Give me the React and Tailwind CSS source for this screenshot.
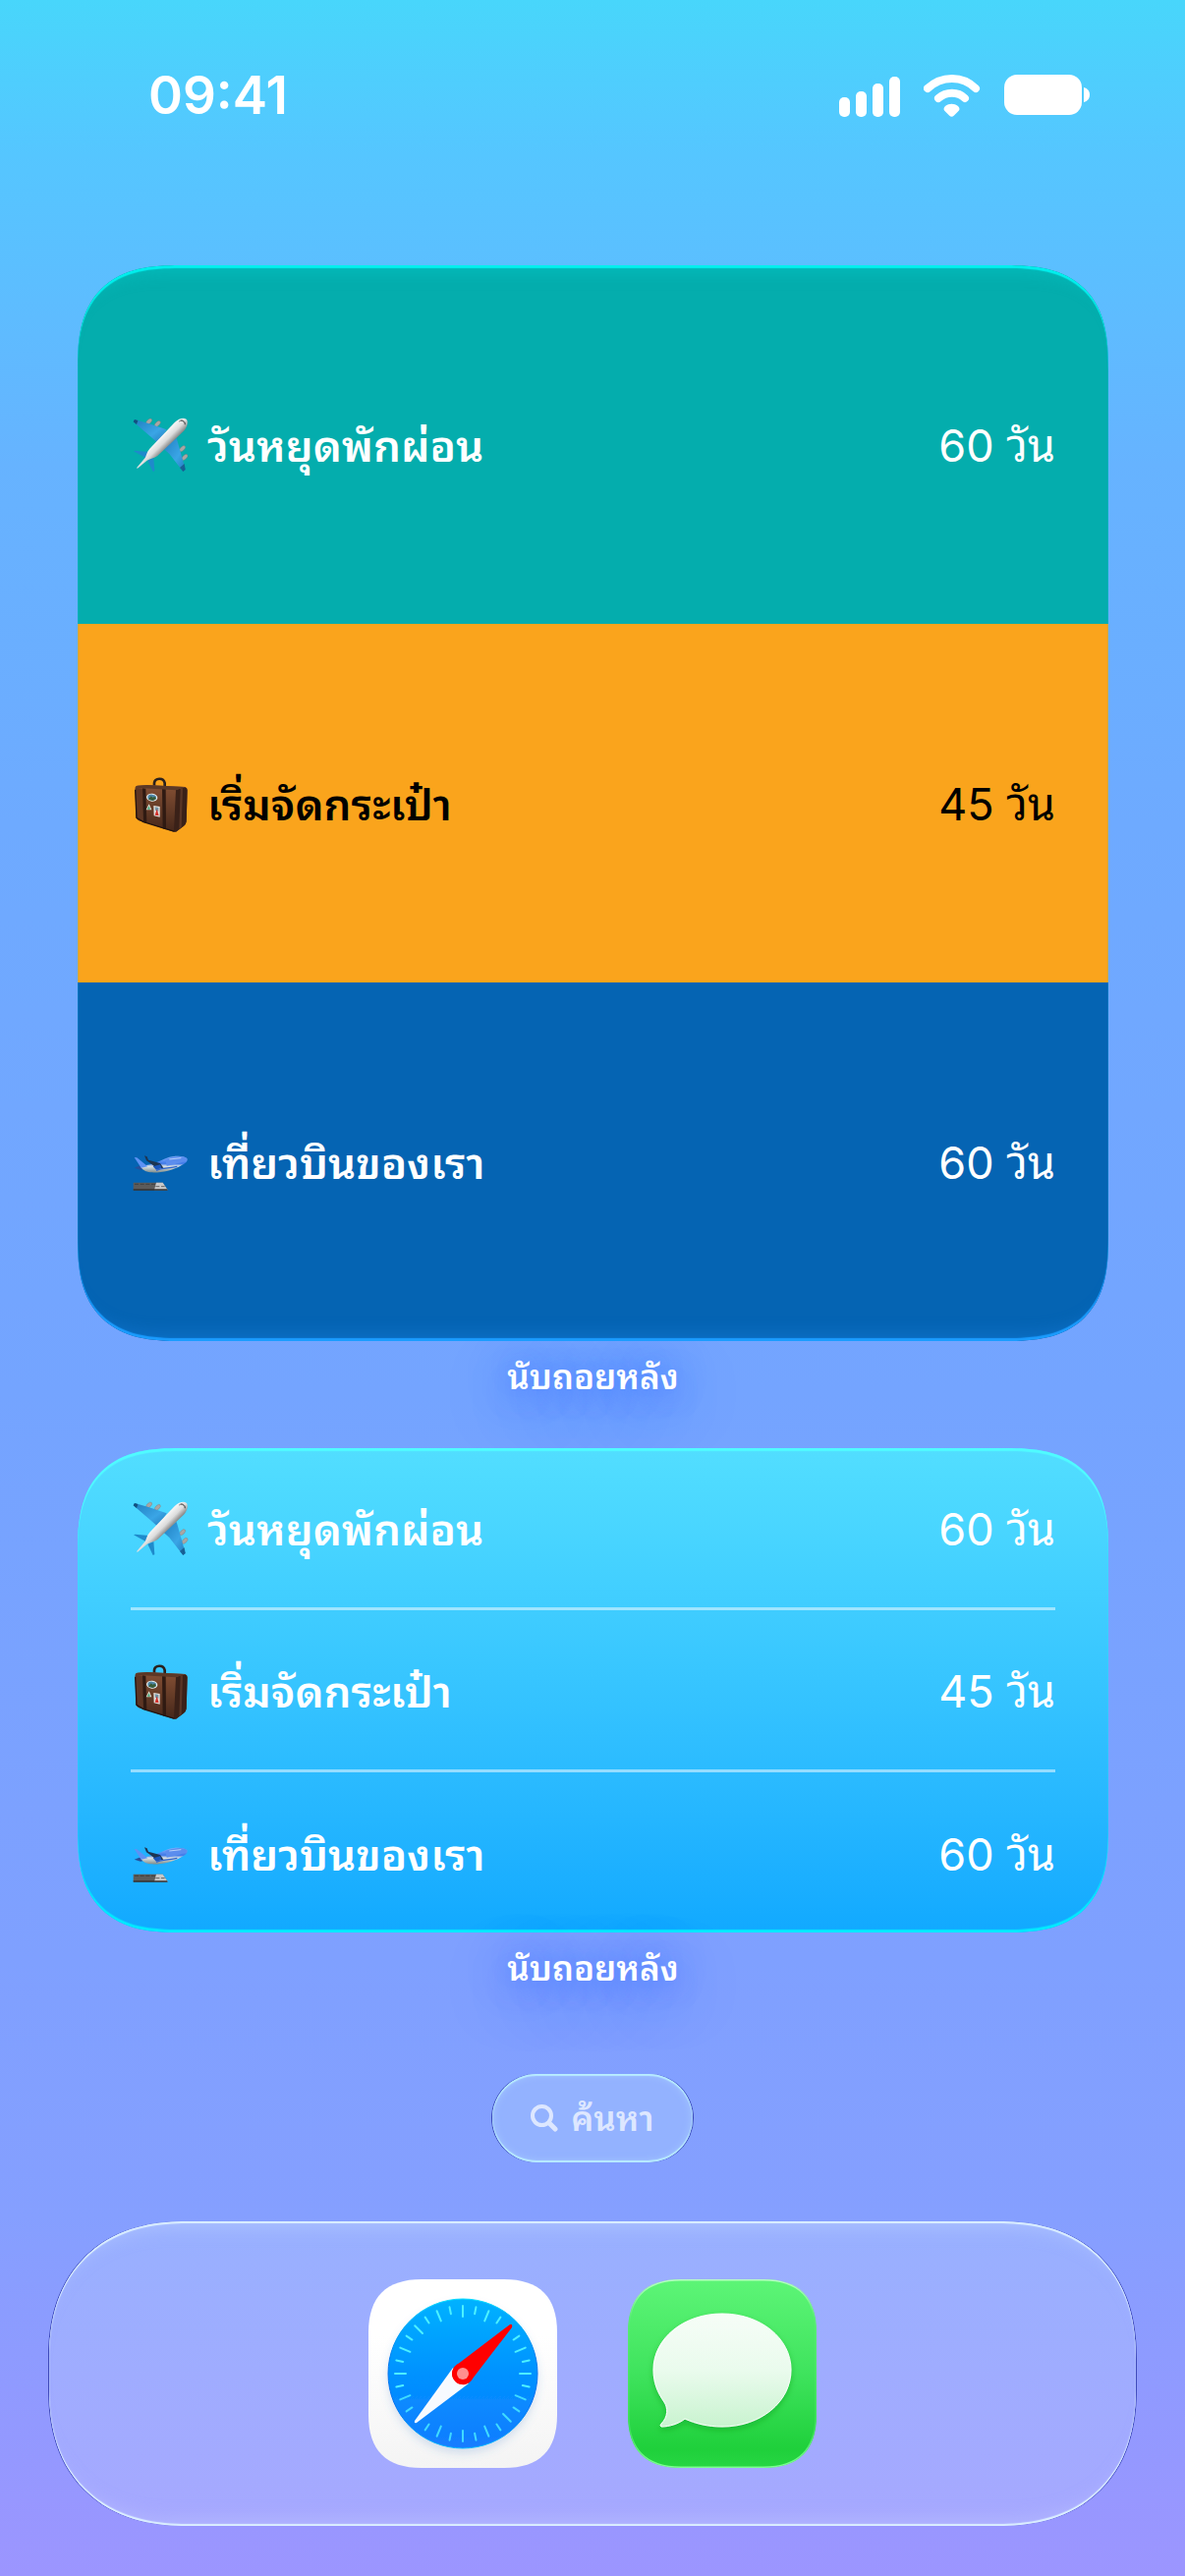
import React from 'react';

const EVENTS = [
    { icon: 'plane', title: 'วันหยุดพักผ่อน', days: '60 วัน', tile: 'bg-[#04adad] text-white' },
    { icon: 'luggage', title: 'เริ่มจัดกระเป๋า', days: '45 วัน', tile: 'bg-[#faa41c] text-black' },
    { icon: 'departure', title: 'เที่ยวบินของเรา', days: '60 วัน', tile: 'bg-[#0564b3] text-white' }
];

const SQUIRCLE = 'M54 0H138C174 0 192 18 192 54V138C192 174 174 192 138 192H54C18 192 0 174 0 138V54C0 18 18 0 54 0Z';

function PlaneIcon({ id }) {
    return (
        <svg viewBox="0 0 174 174" className="w-[58px] h-[58px] shrink-0" aria-hidden="true">
            <defs>
                <linearGradient id={`${id}-body`} x1="70" y1="50" x2="112" y2="92" gradientUnits="userSpaceOnUse">
                    <stop offset="0" stopColor="#8e8e8e" />
                    <stop offset="0.35" stopColor="#f4f4f4" />
                    <stop offset="0.65" stopColor="#dcdcdc" />
                    <stop offset="1" stopColor="#777" />
                </linearGradient>
                <linearGradient id={`${id}-wing`} x1="0" y1="0" x2="1" y2="1">
                    <stop offset="0" stopColor="#1f7fc0" />
                    <stop offset="0.6" stopColor="#3aa5e6" />
                    <stop offset="1" stopColor="#2079ba" />
                </linearGradient>
            </defs>
            <g fill="#a9a6a4" stroke="#77716d" strokeWidth="1">
                <ellipse cx="50" cy="15" rx="11" ry="6" transform="rotate(-45 50 15)" />
                <ellipse cx="76" cy="22" rx="11" ry="6" transform="rotate(-45 76 22)" />
                <ellipse cx="152" cy="98" rx="11" ry="6" transform="rotate(-45 152 98)" />
                <ellipse cx="159" cy="124" rx="11" ry="6" transform="rotate(-45 159 124)" />
            </g>
            <path d="M2 16 6 9 46 20 104 40 78 82 56 62Z" fill={`url(#${id}-wing)`} />
            <path d="M161 162 154 168 112 114 92 96 134 66 142 94Z" fill={`url(#${id}-wing)`} />
            <path d="M2 16 6 9 16 12 12 24Z" fill="#12507f" />
            <path d="M161 162 154 168 144 156 158 144Z" fill="#12507f" opacity="0.7" />
            <path d="M3 106 8 104 50 108 40 126Z" fill="#1f8acb" />
            <path d="M62 168 67 166 64 126 46 134Z" fill="#1f8acb" />
            <path d="M128 18C140 6 156 2 164 8C171 15 167 32 156 44L76 120C66 128 54 128 44 134L15 158L12 157L38 126C42 120 42 110 52 98Z" fill={`url(#${id}-body)`} />
            <path d="M142 15C149 8 162 14 160 24M147 12C154 12 160 18 160 25" fill="none" stroke="#5e5e5e" strokeWidth="3" />
        </svg>
    );
}

function LuggageIcon({ id }) {
    return (
        <svg viewBox="0 0 174 174" className="w-[58px] h-[58px] shrink-0" aria-hidden="true">
            <defs>
                <linearGradient id={`${id}-case`} x1="0" y1="0" x2="0" y2="1">
                    <stop offset="0" stopColor="#855034" />
                    <stop offset="1" stopColor="#45271a" />
                </linearGradient>
            </defs>
            <path d="M66 34V24C68 8 94 6 98 24V34" fill="none" stroke="#2b211d" strokeWidth="8" />
            <path d="M8 38Q8 33 14 32L44 30 160 36Q167 38 167 46L164 142Q163 150 156 155L132 173 122 172 18 138Q10 134 10 126Z" fill={`url(#${id}-case)`} />
            <path d="M132 45 160 37Q167 38 167 46L164 142Q163 150 156 155L132 173 126 170Z" fill="#3a2118" />
            <path d="M146 42 153 39 149 158 142 164Z" fill="#5a3626" />
            <path d="M8 38 30 41 35 144 18 138Q10 134 10 126Z" fill="#5d3624" />
            <path d="M30 40 40 41 43 147 33 143Z M90 40 101 41 102 166 92 163Z" fill="#2f1a12" />
            <path d="M8 38Q8 33 14 32L44 30 160 36 132 46Z" fill="#5b3826" />
            <path d="M8 44 12 130 33 143 128 172" fill="none" stroke="#24140e" strokeWidth="4" />
            <ellipse cx="59" cy="68" rx="17" ry="12" fill="#e4eeee" transform="rotate(6 59 68)" />
            <ellipse cx="59" cy="68" rx="13" ry="9" fill="#4d85a5" transform="rotate(6 59 68)" />
            <path d="M48 74 56 64 61 68 67 65 72 72 62 78Z" fill="#385c38" />
            <path d="M50 88 58 106 41 106Z" fill="#e7e7dc" />
            <path d="M50 94 54 104 44 104Z" fill="#45a47a" />
            <path d="M64 93 83 96 83 128 65 124Z" fill="#e5e1dc" />
            <path d="M68 97 79 99 79 110 69 108Z" fill="#7295a6" />
            <path d="M74 103 80 124 68 122Z" fill="#d12f2a" />
        </svg>
    );
}

function DepartureIcon({ id }) {
    return (
        <svg viewBox="0 0 174 174" className="w-[58px] h-[58px] shrink-0" aria-hidden="true">
            <defs>
                <linearGradient id={`${id}-hull`} x1="0" y1="0" x2="0" y2="1">
                    <stop offset="0" stopColor="#8db8ff" />
                    <stop offset="0.45" stopColor="#3d78e8" />
                    <stop offset="0.62" stopColor="#dbe3e6" />
                    <stop offset="1" stopColor="#7f8d8c" />
                </linearGradient>
            </defs>
            <path d="M5 104 20 98 42 106 24 110Z" fill="#274f9b" />
            <path d="M24 98C60 96 84 82 104 74C130 66 158 67 166 76C170 84 160 92 146 98C120 112 88 120 54 118C40 116 26 108 24 98Z" fill={`url(#${id}-hull)`} />
            <path d="M5 72 13 73 46 100 26 104Z" fill="#5d92f5" />
            <path d="M100 78C130 66 158 67 166 76C168 82 150 88 132 92L104 98Z" fill="#5b8dee" />
            <path d="M112 78 148 74" stroke="#b9d1fa" strokeWidth="3" fill="none" />
            <path d="M36 67 44 70 48 80 84 90 94 104 76 107 54 90 42 82Z" fill="#1d3552" />
            <path d="M62 100 84 94 88 104 72 110Z" fill="#1b57bd" />
            <path d="M72 112C90 104 110 106 136 100" stroke="#2d64ce" strokeWidth="4" fill="none" />
            <path d="M2 149H92L107 172H2Z" fill="#5c5b5a" />
            <path d="M72 149H92L107 172H66Z" fill="#c9c9c9" />
            <path d="M2 169H105L107 173H2Z" fill="#34302f" />
            <path d="M6 154H70M70 161H98" stroke="#343434" strokeWidth="2" strokeDasharray="12 5" />
        </svg>
    );
}

function EventIcon({ name, id }) {
    if (name === 'plane') return <PlaneIcon id={id} />;
    if (name === 'luggage') return <LuggageIcon id={id} />;
    return <DepartureIcon id={id} />;
}

function EventRow({ event, id }) {
    return (
        <>
            <div className="flex items-center gap-[18px] pl-0.5">
                <EventIcon name={event.icon} id={id} />
                <h2 className="pt-0.5 text-[44px] leading-[72px] font-semibold">{event.title}</h2>
            </div>
            <p className="pt-0.5 text-[45px] leading-[72px]">{event.days}</p>
        </>
    );
}

function WidgetLabel({ className }) {
    return (
        <p className={`text-center text-[35px] leading-[60px] font-semibold text-white [text-shadow:0_12px_60px_#2b6bffcc,0_4px_24px_#3b78ff80] ${className}`}>
            นับถอยหลัง
        </p>
    );
}

function StatusBar() {
    return (
        <header className="flex items-start justify-between pt-[65px] pl-[151px] pr-[96px] h-[270px] text-white">
            <time className="text-[53px] leading-[64px] font-semibold">09:41</time>
            <div className="flex items-center gap-6 pt-[9px]">
                <svg viewBox="0 0 62 46" className="w-[62px] h-[46px]" fill="currentColor" aria-hidden="true">
                    <rect x="0" y="25" width="11" height="20" rx="5" />
                    <rect x="17" y="19" width="11" height="26" rx="5" />
                    <rect x="34" y="11" width="11" height="34" rx="5" />
                    <rect x="51" y="4" width="11" height="41" rx="5" />
                </svg>
                <svg viewBox="0 0 58 46" className="w-[58px] h-[46px]" fill="none" stroke="currentColor" strokeWidth="8" strokeLinecap="round" aria-hidden="true">
                    <path d="M4 16C18 2.500 40 2.500 53 16" />
                    <path d="M15 26C23 19 35 19 42 26" />
                    <path d="M22 34C26 31 31 31 35 34Q38 37 35 39.500L31 43.500Q28.500 46 26 43.500L22 39.500Q19 37 22 34Z" fill="currentColor" stroke="none" />
                </svg>
                <svg viewBox="0 0 88 46" className="w-[88px] h-[46px]" fill="currentColor" aria-hidden="true">
                    <rect x="0" y="2" width="79" height="41" rx="13" />
                    <path d="M81 15C85 16 87 19 87 22.500C87 26 85 29 81 30Z" />
                </svg>
            </div>
        </header>
    );
}

function SafariIcon() {
    const ticks = Array.from({ length: 32 }, (_, i) => i).filter(i => i !== 4 && i !== 20);
    return (
        <svg viewBox="0 0 192 192" className="w-[192px] h-[192px]" aria-hidden="true">
            <defs>
                <linearGradient id="safari-tile" x1="0" y1="0" x2="0" y2="1">
                    <stop offset="0.3" stopColor="#ffffff" />
                    <stop offset="1" stopColor="#f4f4f4" />
                </linearGradient>
                <linearGradient id="safari-dial" x1="0" y1="0" x2="0" y2="1">
                    <stop offset="0" stopColor="#00b2ff" />
                    <stop offset="0.5" stopColor="#0092ff" />
                    <stop offset="1" stopColor="#147cff" />
                </linearGradient>
                <linearGradient id="safari-rim" x1="0" y1="0" x2="0" y2="1">
                    <stop offset="0" stopColor="#00dcff" />
                    <stop offset="0.4" stopColor="#0077ef" />
                    <stop offset="0.7" stopColor="#0070f0" />
                    <stop offset="1" stopColor="#00b8ff" />
                </linearGradient>
                <filter id="safari-shadow" x="-20%" y="-20%" width="140%" height="140%">
                    <feDropShadow dx="0" dy="5" stdDeviation="4" floodColor="#4a7fc8" floodOpacity="0.2" />
                </filter>
            </defs>
            <path d={SQUIRCLE} fill="url(#safari-tile)" />
            <circle cx="96" cy="96" r="76" fill="url(#safari-dial)" stroke="url(#safari-rim)" strokeWidth="1" filter="url(#safari-shadow)" />
            <g stroke="#4cf1ff" strokeWidth="2" strokeLinecap="round">
                {ticks.map(i => (
                    <line
                        key={i}
                        x1="96"
                        x2="96"
                        y1="27"
                        y2={i % 2 ? 34 : 38}
                        opacity={i > 9 && i < 23 ? 0.8 : 1}
                        transform={`rotate(${i * 11.25} 96 96)`}
                    />
                ))}
            </g>
            <path d="M47 144Q46 147 49 146L102 106 86 90Z" fill="#f7faff" />
            <path d="M144 46Q147 45 146 49L106 101A11 11 0 1 1 90 87Z" fill="#ff0000" />
            <circle cx="96" cy="96" r="11" fill="#ff0000" />
            <circle cx="96" cy="96" r="6" fill="#ff8f8f" />
        </svg>
    );
}

function MessagesIcon() {
    return (
        <svg viewBox="0 0 192 192" className="w-[192px] h-[192px]" aria-hidden="true">
            <defs>
                <linearGradient id="messages-tile" x1="0" y1="0" x2="0" y2="1">
                    <stop offset="0" stopColor="#5df577" />
                    <stop offset="0.5" stopColor="#3fe35d" />
                    <stop offset="0.9" stopColor="#1fd03b" />
                    <stop offset="1" stopColor="#27d643" />
                </linearGradient>
                <linearGradient id="messages-rim" x1="0" y1="0" x2="0" y2="1">
                    <stop offset="0" stopColor="#b9ffc4" />
                    <stop offset="0.2" stopColor="#5cec78" />
                    <stop offset="0.8" stopColor="#3fe05b" />
                    <stop offset="1" stopColor="#7dff92" />
                </linearGradient>
                <linearGradient id="messages-bubble" x1="0" y1="0" x2="0" y2="1">
                    <stop offset="0" stopColor="#f6fdf7" />
                    <stop offset="0.5" stopColor="#eafbed" />
                    <stop offset="1" stopColor="#c9f3d0" />
                </linearGradient>
                <clipPath id="messages-clip">
                    <path d={SQUIRCLE} />
                </clipPath>
                <filter id="messages-shadow" x="-20%" y="-20%" width="140%" height="140%">
                    <feDropShadow dx="0" dy="3" stdDeviation="3" floodColor="#008c1e" floodOpacity="0.4" />
                </filter>
            </defs>
            <path d={SQUIRCLE} fill="url(#messages-tile)" stroke="url(#messages-rim)" strokeWidth="3" clipPath="url(#messages-clip)" />
            <path
                d="M96 35C135 35 166 60 166 92C166 125 135 150 96 150C82 150 69 147 58 142C52 147 42 150 34 150Q32 149 34 147C41 140 41 131 37 125C30 115 26 105 26 92C26 60 57 35 96 35Z"
                fill="url(#messages-bubble)"
                stroke="#ffffff"
                strokeWidth="1"
                filter="url(#messages-shadow)"
            />
        </svg>
    );
}

export default function App() {
    return (
        <div className="min-h-screen flex flex-col font-[Inter,'Noto_Sans_Thai_Looped','Noto_Looped_Thai',Loma,Waree,Garuda,'Noto_Sans_Thai','Noto_Sans',sans-serif] bg-[linear-gradient(180deg,#48d6fb_0%,#55c6ff_6%,#66b3ff_18%,#6eaaff_32%,#74a4ff_54%,#7fa0ff_76%,#859fff_86%,#9299ff_94%,#9c95ff_100%)]">
            <StatusBar />

            <main className="flex flex-col pl-[79px] pr-[78px]">
                <section className="relative overflow-hidden rounded-[104px] [corner-shape:superellipse(1.4)]">
                    {EVENTS.map(event => (
                        <div key={event.icon} className={`flex items-center justify-between h-[365px] px-[54px] ${event.tile}`}>
                            <EventRow event={event} id={`large-${event.icon}`} />
                        </div>
                    ))}
                    <div className="absolute inset-0 pointer-events-none rounded-[inherit] [corner-shape:inherit] shadow-[inset_0_3px_1px_#00f0ee,inset_0_-3px_1px_#1a9cff,inset_0_24px_16px_-16px_#00cfd066,inset_0_-24px_16px_-16px_#1a80e066]" />
                </section>
                <WidgetLabel className="pt-[6px] pb-[43px]" />

                <section className="rounded-[104px] [corner-shape:superellipse(1.4)] px-[54px] text-white divide-y-3 divide-white/50 bg-linear-to-b from-[#52deff] to-[#11a9ff] shadow-[inset_0_3px_1px_#50fbff,inset_0_-3px_1px_#00eaff]">
                    {EVENTS.map(event => (
                        <div key={event.icon} className="flex items-center justify-between h-[165px] last:h-[163px] pt-0.5">
                            <EventRow event={event} id={`medium-${event.icon}`} />
                        </div>
                    ))}
                </section>
                <WidgetLabel className="pt-[6px] pb-[78px]" />
            </main>

            <button
                type="button"
                className="self-center flex items-center justify-center gap-[13px] w-[204px] h-[90px] rounded-full bg-[#93b2ff] text-[#dde7ff] shadow-[-1px_0_0_#3a48b8,1px_0_0_#3a48b8,inset_0_2px_1px_#b8ecff,inset_0_-2px_1px_#b8ecff,inset_0_0_8px_#a8ccff]"
            >
                <svg viewBox="0 0 28 28" className="w-7 h-7" fill="none" stroke="currentColor" strokeLinecap="round" aria-hidden="true">
                    <circle cx="11.500" cy="11.500" r="9.500" strokeWidth="4" />
                    <path d="M19 19 25 25" strokeWidth="5" />
                </svg>
                <span className="text-[35px] leading-[60px] font-semibold">ค้นหา</span>
            </button>

            <nav className="mx-[50px] mt-[60px] mb-[51px] flex justify-center gap-[72px] py-[59px] rounded-[140px] [corner-shape:superellipse(1.2)] bg-linear-to-b from-[#98b0ff] to-[#a6a8ff] shadow-[-1px_0_0_#3f4aba,1px_0_0_#3f4aba,inset_0_2px_1px_#dcf0ff,inset_0_-2px_1px_#dcf0ff,inset_0_24px_16px_-16px_#b4c8ff99,inset_0_-24px_16px_-16px_#b8bcff99]">
                <button type="button" aria-label="Safari">
                    <SafariIcon />
                </button>
                <button type="button" aria-label="Messages">
                    <MessagesIcon />
                </button>
            </nav>
        </div>
    );
}
